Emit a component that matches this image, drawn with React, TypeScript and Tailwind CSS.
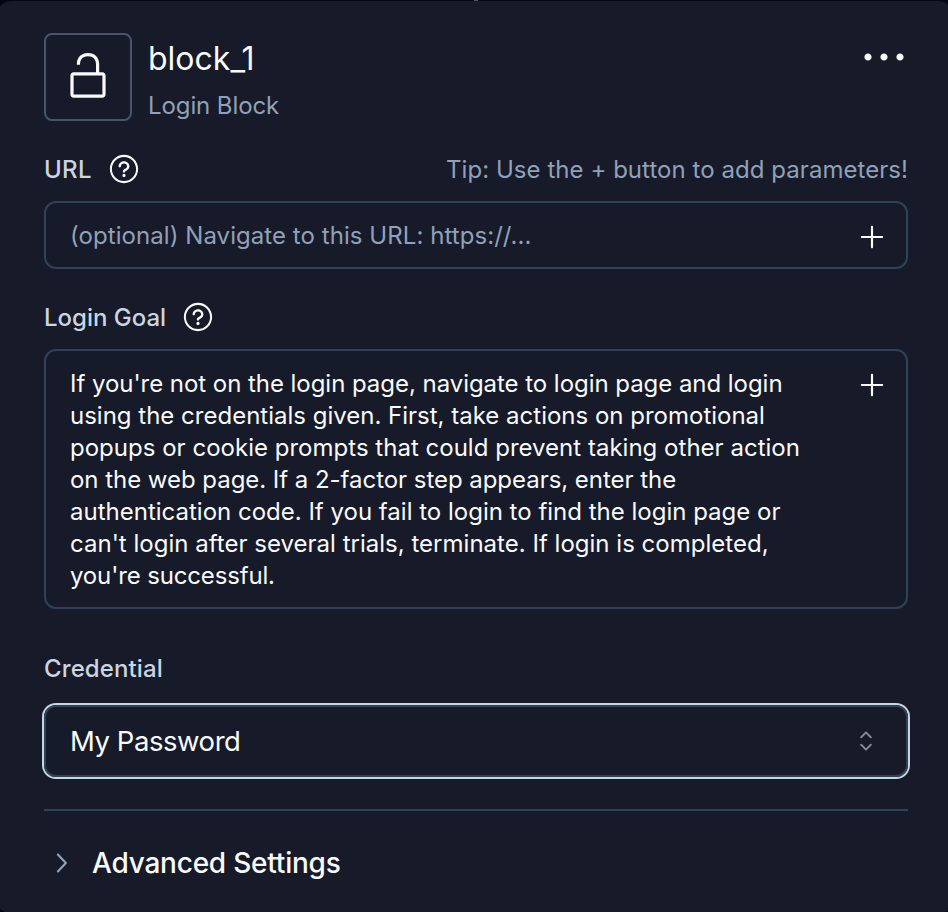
import type { ReactNode } from "react";
import {
  RxCaretSort,
  RxChevronRight,
  RxDotsHorizontal,
  RxLockOpen1,
  RxPlus,
  RxQuestionMarkCircled,
} from "react-icons/rx";

const goalLines = [
  { text: "If you're not on the login page, navigate to login page and login", tracking: "tracking-[-0.045px]" },
  { text: "using the credentials given. First, take actions on promotional", tracking: "tracking-normal" },
  { text: "popups or cookie prompts that could prevent taking other action", tracking: "tracking-[0.015px]" },
  { text: "on the web page. If a 2-factor step appears, enter the", tracking: "tracking-[-0.04px]" },
  { text: "authentication code. If you fail to login to find the login page or", tracking: "tracking-normal" },
  { text: "can't login after several trials, terminate. If login is completed,", tracking: "tracking-[0.015px]" },
  { text: "you're successful.", tracking: "tracking-[-0.15px]" },
];

function Label({ children, help }: { children: ReactNode; help?: boolean }) {
  return (
    <div className="flex h-8 items-center gap-4 text-2xl font-medium text-slate-300">
      <span className="whitespace-nowrap">{children}</span>
      {help && <RxQuestionMarkCircled className="size-8 text-slate-50" />}
    </div>
  );
}

export default function App() {
  return (
    <div className="relative h-[912px] w-[948px] overflow-hidden bg-[#020617] pt-px font-['Inter',sans-serif]">
      <div className="absolute top-0 left-[474px] h-px w-1 bg-[#555555]" />
      <div className="-ml-1 flex h-[913px] w-[958px] flex-col rounded-2xl bg-[#171a28] pt-8 pr-[46px] pl-12">
        <header className="flex h-[88px] justify-between">
          <div className="flex gap-4">
            <div className="flex size-[88px] items-center justify-center rounded-lg border-2 border-slate-600">
              <RxLockOpen1 className="size-12 text-slate-50" />
            </div>
            <div className="flex flex-col pt-px">
              <span className="h-12 text-[32px] leading-[50px] text-slate-50">block_1</span>
              <span className="mt-2 text-2xl leading-8 tracking-[-0.1px] text-slate-400">Login Block</span>
            </div>
          </div>
          <RxDotsHorizontal className="size-12 text-slate-50" />
        </header>

        <div className="mt-8 flex h-8 items-center justify-between">
          <Label help>
            <span className="block pt-0.5 tracking-[0.33px]">URL</span>
          </Label>
          <span className="h-8 text-2xl leading-[34px] tracking-[0.05px] whitespace-nowrap text-slate-400">
            Tip: Use the + button to add parameters!
          </span>
        </div>
        <div className="mt-4 flex h-[68px] items-center justify-between rounded-xl border-2 border-slate-700 pr-[18px] pl-6">
          <span className="pt-0.5 text-2xl tracking-[0.06px] whitespace-nowrap text-slate-400">
            (optional) Navigate to this URL: https://...
          </span>
          <RxPlus className="mt-1 size-8 text-slate-50" />
        </div>

        <div className="mt-8">
          <Label help>
            <span className="block pt-0.5">Login Goal</span>
          </Label>
        </div>
        <div className="mt-4 flex h-[260px] items-start justify-between rounded-xl border-2 border-slate-700 pt-[17px] pr-[18px] pl-6">
          <div className="flex flex-col text-2xl leading-8 whitespace-nowrap text-slate-50">
            {goalLines.map((line) => (
              <span key={line.text} className={line.tracking}>
                {line.text}
              </span>
            ))}
          </div>
          <RxPlus className="mt-px size-8 shrink-0 text-slate-50" />
        </div>

        <div className="mt-11">
          <Label>
            <span className="tracking-[0.1px]">Credential</span>
          </Label>
        </div>
        <div className="mt-5 flex h-[72px] items-center justify-between rounded-xl border-2 border-slate-700 pr-6 pl-6 ring-2 ring-slate-300">
          <span className="pt-0.5 text-[27.5px] tracking-[-0.45px] text-slate-50">My Password</span>
          <RxCaretSort className="size-8 text-slate-50 opacity-50" />
        </div>

        <div className="mt-8 h-0.5 bg-slate-700" />
        <div className="mt-8 flex h-10 items-center gap-4">
          <RxChevronRight className="size-8 text-slate-400" />
          <span className="text-[28px] font-medium tracking-[-0.22px] text-slate-50">Advanced Settings</span>
        </div>
      </div>
    </div>
  );
}
